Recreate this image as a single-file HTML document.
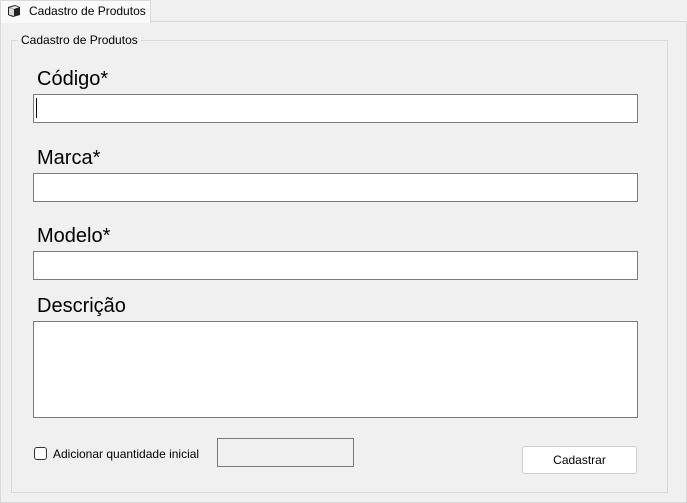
<!DOCTYPE html><html><head><style>
body{margin:0;width:687px;height:503px;background:#f0f0f0;position:relative;overflow:hidden;font-family:"Liberation Sans",sans-serif}
.a{position:absolute;box-sizing:border-box}
.lbl{font-size:20px;color:#000}
.in{background:#fff;border:1px solid #7a7a7a}
</style></head><body>
<div class="a" style="left:0;top:21px;width:687px;height:482px;border:1px solid #d9d9d9;background:#f0f0f0"></div>
<div class="a" style="left:0;top:0;width:151px;height:23px;background:#f9f9f9;border:1px solid #d9d9d9;border-bottom:none"></div>
<svg class="a" style="left:6px;top:3px" width="16" height="16" viewBox="0 0 16 16"><path d="M2 4 L9 2 L14 4 L14 12 L7 14 L2 12 Z" fill="#222"/><path d="M3 5 L8 6.5 L8 13 L3 11.5Z" fill="#ddd"/><path d="M3 5 L9 3 L13 4.2 L8 6Z" fill="#eee"/></svg>
<div class="a" style="left:29px;top:4px;font-size:12px">Cadastro de Produtos</div>
<div class="a" style="left:11px;top:40px;width:657px;height:453px;border:1px solid #d9d9d9"></div>
<div class="a" style="left:18px;top:33px;font-size:12px;background:#f0f0f0;padding:0 3px">Cadastro de Produtos</div>
<div class="a lbl" style="left:37px;top:68px">Código*</div>
<div class="a in" style="left:33px;top:94px;width:605px;height:29px"></div>
<div class="a" style="left:36px;top:98px;width:1px;height:20px;background:#000"></div>
<div class="a lbl" style="left:37px;top:147px">Marca*</div>
<div class="a in" style="left:33px;top:173px;width:605px;height:29px"></div>
<div class="a lbl" style="left:37px;top:225px">Modelo*</div>
<div class="a in" style="left:33px;top:251px;width:605px;height:29px"></div>
<div class="a lbl" style="left:37px;top:295px">Descrição</div>
<div class="a in" style="left:33px;top:321px;width:605px;height:97px"></div>
<div class="a" style="left:34px;top:447px;width:13px;height:13px;border:1px solid #333;border-radius:3px;background:#fff"></div>
<div class="a" style="left:53px;top:447px;font-size:12px">Adicionar quantidade inicial</div>
<div class="a" style="left:217px;top:438px;width:137px;height:29px;border:1px solid #7a7a7a"></div>
<div class="a" style="left:522px;top:446px;width:115px;height:28px;border:1px solid #d0d0d0;border-radius:3px;background:#fff;font-size:12px;text-align:center;line-height:26px">Cadastrar</div>
</body></html>
